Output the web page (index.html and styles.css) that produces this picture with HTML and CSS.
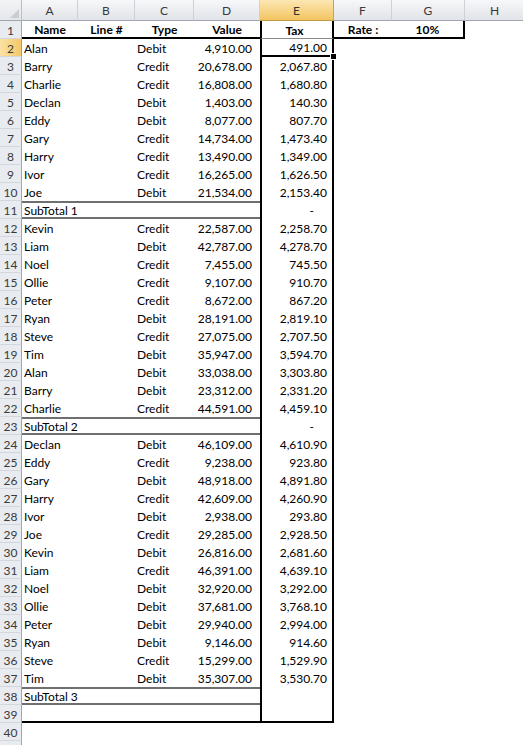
FILE: index.html
```html
<!DOCTYPE html>
<html>
<head>
<meta charset="utf-8">
<link rel="stylesheet" href="styles.css">
</head>
<body>
<div class="sheet">
  <div class="corner"><svg width="10" height="10" viewBox="0 0 10 10"><path d="M10 1 L10 10 L1 10 Z" fill="#c9cdd2"/></svg></div>
  <div class="ch">A</div><div class="ch">B</div><div class="ch">C</div><div class="ch">D</div><div class="ch sel">E</div><div class="ch">F</div><div class="ch">G</div><div class="ch">H</div>

  <div class="rh">1</div><div class="c b ctr hb">Name</div><div class="c b ctr hb">Line #</div><div class="c b ctr hb">Type</div><div class="c b ctr hb">Value</div><div class="c b ctr e e1">Tax</div><div class="c b ctr hb">Rate :</div><div class="c b ctr hb gr">10%</div>

  <div class="rh sel">2</div><div class="c">Alan</div><div class="c"></div><div class="c">Debit</div><div class="c n">4,910.00</div><div class="c n e act">491.00<span class="handle"></span></div>
  <div class="rh">3</div><div class="c">Barry</div><div class="c"></div><div class="c">Credit</div><div class="c n">20,678.00</div><div class="c n e">2,067.80</div>
  <div class="rh">4</div><div class="c">Charlie</div><div class="c"></div><div class="c">Credit</div><div class="c n">16,808.00</div><div class="c n e">1,680.80</div>
  <div class="rh">5</div><div class="c">Declan</div><div class="c"></div><div class="c">Debit</div><div class="c n">1,403.00</div><div class="c n e">140.30</div>
  <div class="rh">6</div><div class="c">Eddy</div><div class="c"></div><div class="c">Debit</div><div class="c n">8,077.00</div><div class="c n e">807.70</div>
  <div class="rh">7</div><div class="c">Gary</div><div class="c"></div><div class="c">Credit</div><div class="c n">14,734.00</div><div class="c n e">1,473.40</div>
  <div class="rh">8</div><div class="c">Harry</div><div class="c"></div><div class="c">Credit</div><div class="c n">13,490.00</div><div class="c n e">1,349.00</div>
  <div class="rh">9</div><div class="c">Ivor</div><div class="c"></div><div class="c">Credit</div><div class="c n">16,265.00</div><div class="c n e">1,626.50</div>
  <div class="rh">10</div><div class="c">Joe</div><div class="c"></div><div class="c">Debit</div><div class="c n">21,534.00</div><div class="c n e">2,153.40</div>
  <div class="rh">11</div><div class="c sub">SubTotal 1</div><div class="c n e dash">-</div>
  <div class="rh">12</div><div class="c">Kevin</div><div class="c"></div><div class="c">Credit</div><div class="c n">22,587.00</div><div class="c n e">2,258.70</div>
  <div class="rh">13</div><div class="c">Liam</div><div class="c"></div><div class="c">Debit</div><div class="c n">42,787.00</div><div class="c n e">4,278.70</div>
  <div class="rh">14</div><div class="c">Noel</div><div class="c"></div><div class="c">Credit</div><div class="c n">7,455.00</div><div class="c n e">745.50</div>
  <div class="rh">15</div><div class="c">Ollie</div><div class="c"></div><div class="c">Credit</div><div class="c n">9,107.00</div><div class="c n e">910.70</div>
  <div class="rh">16</div><div class="c">Peter</div><div class="c"></div><div class="c">Credit</div><div class="c n">8,672.00</div><div class="c n e">867.20</div>
  <div class="rh">17</div><div class="c">Ryan</div><div class="c"></div><div class="c">Debit</div><div class="c n">28,191.00</div><div class="c n e">2,819.10</div>
  <div class="rh">18</div><div class="c">Steve</div><div class="c"></div><div class="c">Credit</div><div class="c n">27,075.00</div><div class="c n e">2,707.50</div>
  <div class="rh">19</div><div class="c">Tim</div><div class="c"></div><div class="c">Debit</div><div class="c n">35,947.00</div><div class="c n e">3,594.70</div>
  <div class="rh">20</div><div class="c">Alan</div><div class="c"></div><div class="c">Debit</div><div class="c n">33,038.00</div><div class="c n e">3,303.80</div>
  <div class="rh">21</div><div class="c">Barry</div><div class="c"></div><div class="c">Debit</div><div class="c n">23,312.00</div><div class="c n e">2,331.20</div>
  <div class="rh">22</div><div class="c">Charlie</div><div class="c"></div><div class="c">Credit</div><div class="c n">44,591.00</div><div class="c n e">4,459.10</div>
  <div class="rh">23</div><div class="c sub">SubTotal 2</div><div class="c n e dash">-</div>
  <div class="rh">24</div><div class="c">Declan</div><div class="c"></div><div class="c">Debit</div><div class="c n">46,109.00</div><div class="c n e">4,610.90</div>
  <div class="rh">25</div><div class="c">Eddy</div><div class="c"></div><div class="c">Credit</div><div class="c n">9,238.00</div><div class="c n e">923.80</div>
  <div class="rh">26</div><div class="c">Gary</div><div class="c"></div><div class="c">Debit</div><div class="c n">48,918.00</div><div class="c n e">4,891.80</div>
  <div class="rh">27</div><div class="c">Harry</div><div class="c"></div><div class="c">Credit</div><div class="c n">42,609.00</div><div class="c n e">4,260.90</div>
  <div class="rh">28</div><div class="c">Ivor</div><div class="c"></div><div class="c">Debit</div><div class="c n">2,938.00</div><div class="c n e">293.80</div>
  <div class="rh">29</div><div class="c">Joe</div><div class="c"></div><div class="c">Credit</div><div class="c n">29,285.00</div><div class="c n e">2,928.50</div>
  <div class="rh">30</div><div class="c">Kevin</div><div class="c"></div><div class="c">Debit</div><div class="c n">26,816.00</div><div class="c n e">2,681.60</div>
  <div class="rh">31</div><div class="c">Liam</div><div class="c"></div><div class="c">Credit</div><div class="c n">46,391.00</div><div class="c n e">4,639.10</div>
  <div class="rh">32</div><div class="c">Noel</div><div class="c"></div><div class="c">Debit</div><div class="c n">32,920.00</div><div class="c n e">3,292.00</div>
  <div class="rh">33</div><div class="c">Ollie</div><div class="c"></div><div class="c">Debit</div><div class="c n">37,681.00</div><div class="c n e">3,768.10</div>
  <div class="rh">34</div><div class="c">Peter</div><div class="c"></div><div class="c">Debit</div><div class="c n">29,940.00</div><div class="c n e">2,994.00</div>
  <div class="rh">35</div><div class="c">Ryan</div><div class="c"></div><div class="c">Debit</div><div class="c n">9,146.00</div><div class="c n e">914.60</div>
  <div class="rh">36</div><div class="c">Steve</div><div class="c"></div><div class="c">Credit</div><div class="c n">15,299.00</div><div class="c n e">1,529.90</div>
  <div class="rh">37</div><div class="c">Tim</div><div class="c"></div><div class="c">Debit</div><div class="c n">35,307.00</div><div class="c n e">3,530.70</div>
  <div class="rh">38</div><div class="c sub">SubTotal 3</div><div class="c n e"></div>
  <div class="rh">39</div><div class="c last"></div><div class="c e lastE"></div>
  <div class="rh">40</div>
  <div class="rh"></div>
</div>
</body>
</html>
```

FILE: styles.css
```css
* { box-sizing: border-box; }
html, body { margin: 0; padding: 0; background: #fff; overflow: hidden; }
body {
  font-family: Lato, "Liberation Sans", Arial, sans-serif;
  font-size: 12px;
  color: #000;
}
.sheet {
  display: grid;
  grid-template-columns: 22px 56px 57px 59px 66px 74px 58px 73px 60px;
  grid-template-rows: 21px repeat(41, 18px);
  width: 523px;
}
.corner {
  grid-column: 1;
  background: linear-gradient(#f3f4f6, #e4e7eb);
  border-right: 1px solid #b9bec5;
  border-bottom: 1px solid #9fa6ae;
  display: flex;
  align-items: flex-end;
  justify-content: flex-end;
  padding: 0 2px 2px 0;
}
.ch {
  background: linear-gradient(#f7f8fa 0%, #eceef1 45%, #e1e4e8 100%);
  border-right: 1px solid #cdd1d6;
  border-bottom: 1px solid #9fa6ae;
  color: #3a3a3a;
  display: flex;
  align-items: center;
  justify-content: center;
  padding-top: 1px;
}
.ch.sel {
  background: linear-gradient(#fbe6b3 0%, #f8d68a 50%, #f2c461 100%);
  border-right: 1px solid #c9a24f;
  border-bottom: 1px solid #c29a47;
  color: #333;
}
.rh {
  grid-column: 1;
  background: #e8ebef;
  border-right: 1px solid #9fa6ae;
  border-bottom: 1px solid #d3d7dc;
  color: #3a3a3a;
  display: flex;
  align-items: center;
  justify-content: center;
  padding-top: 1px;
}
.rh.sel {
  background: linear-gradient(90deg, #fbe2a4, #f4c867);
  border-right: 1px solid #c29a47;
}
.c {
  display: flex;
  align-items: center;
  padding: 1px 3px 0 2px;
  white-space: nowrap;
  overflow: visible;
}
.b { font-weight: bold; }
.ctr { justify-content: center; padding-left: 0; padding-right: 0; }
.n { justify-content: flex-end; padding-right: 8px; }
.hb { border-bottom: 2px solid #000; }
.gr { border-right: 2px solid #000; }
.e {
  border-left: 2px solid #000;
  border-right: 2px solid #000;
  padding-right: 5px;
}
.e1 { border-bottom: 1px solid #8a8a8a; }
.act {
  position: relative;
  border-bottom: 2px solid #000;
}
.handle {
  position: absolute;
  right: -5px;
  bottom: -5px;
  width: 7px;
  height: 7px;
  background: #000;
  border: 1px solid #fff;
}
.dash { padding-right: 18px; }
.sub {
  grid-column: 2 / span 4;
  border-top: 2px solid #6f6f6f;
  border-bottom: 2px solid #6f6f6f;
  padding-top: 0;
}
.last {
  grid-column: 2 / span 4;
  border-bottom: 2px solid #000;
}
.lastE { border-bottom: 2px solid #000; }
```
